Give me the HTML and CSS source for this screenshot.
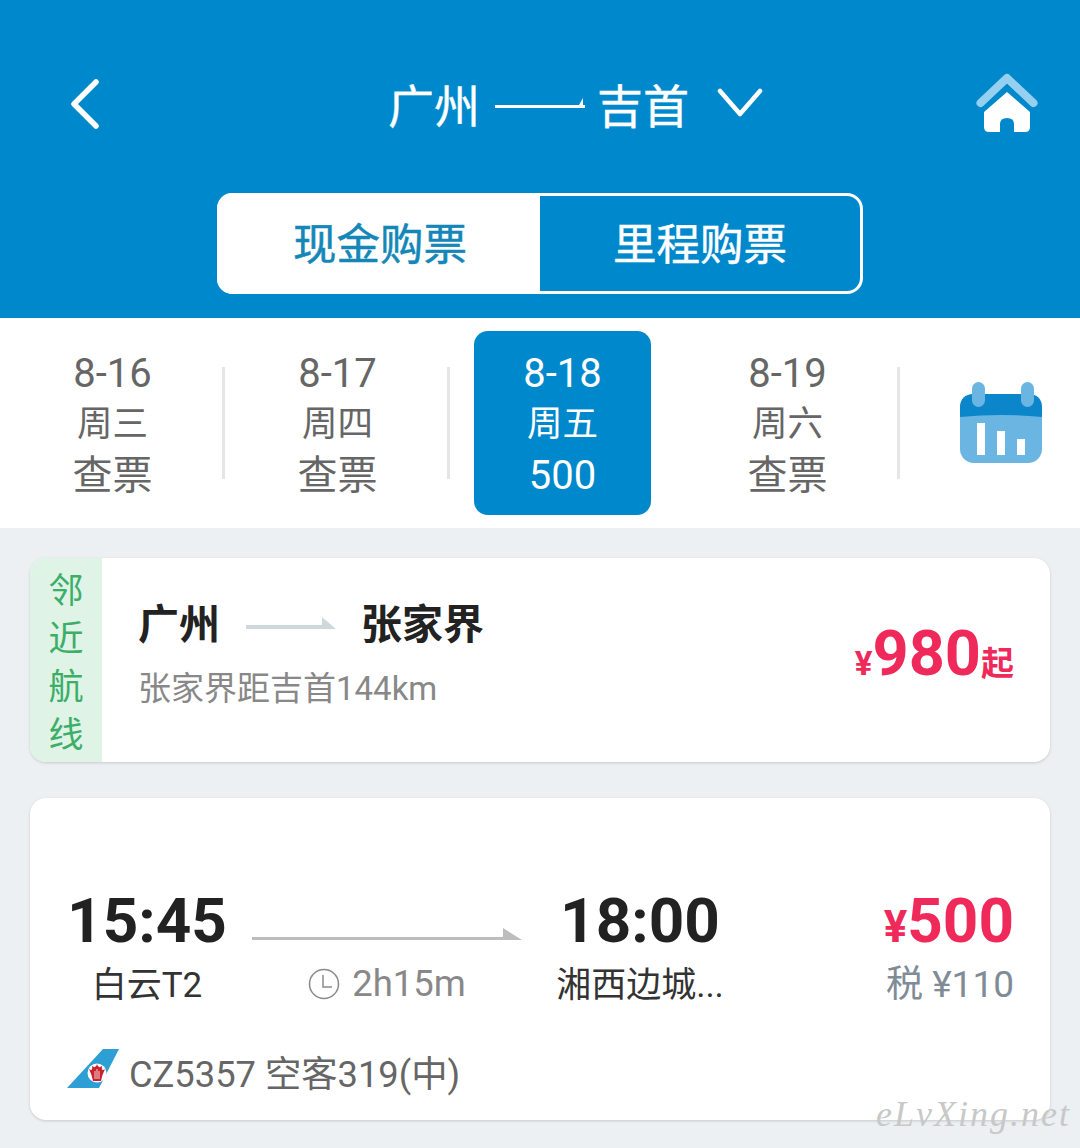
FILE: index.html
```html
<!DOCTYPE html>
<html lang="zh">
<head>
  <meta charset="UTF-8">
  <title>广州 - 吉首</title>
  <link rel="stylesheet" href="styles.css">
</head>
<body>

  <header class="top">
    <div class="nav">
      <svg class="back" width="32" height="50" viewBox="0 0 32 50"><path d="M27 3 L5 25 L27 47" fill="none" stroke="#fff" stroke-width="5.5" stroke-linecap="round" stroke-linejoin="round"/></svg>
      <div class="route">
        <span>广州</span>
        <svg class="route-arrow" width="90" height="12" viewBox="0 0 90 12"><path d="M0 8H84L88 1V8H90V11H0Z" fill="#fff"/></svg>
        <span>吉首</span>
        <svg class="down" width="46" height="30" viewBox="0 0 46 30"><path d="M3 3 L23 26 L43 3" fill="none" stroke="#fff" stroke-width="4.5" stroke-linecap="round" stroke-linejoin="round"/></svg>
      </div>
      <svg class="home" width="62" height="60" viewBox="0 0 62 60">
        <path d="M4.5 30 L31 5 L57.500 30" fill="none" stroke="#96d0f0" stroke-width="8" stroke-linecap="round" stroke-linejoin="round"/>
        <path d="M31 19 L54 39 V54 Q54 59 49 59 H38 V51 Q38 45 31 45 Q24 45 24 51 V59 H13 Q8 59 8 54 V39 Z" fill="#fff"/>
      </svg>
    </div>
    <div class="tabs">
      <div class="tab tab-on">现金购票</div>
      <div class="tab">里程购票</div>
    </div>
  </header>

  <section class="dates">
    <div class="day"><b>8-16</b><span>周三</span><b>查票</b></div>
    <div class="day"><b>8-17</b><span>周四</span><b>查票</b></div>
    <div class="day day-on"><b>8-18</b><span>周五</span><b>500</b></div>
    <div class="day"><b>8-19</b><span>周六</span><b>查票</b></div>
    <div class="cal">
      <svg width="82" height="82" viewBox="0 0 82 82">
        <rect x="0" y="12" width="82" height="69" rx="14" fill="#6bb5e2"/>
        <path d="M0 35 V26 Q0 12 14 12 H68 Q82 12 82 26 V35 Q41 31 0 35 Z" fill="#0b86cb"/>
        <rect x="12" y="0" width="13" height="25" rx="6.500" fill="#6bb5e2"/>
        <rect x="61" y="0" width="13" height="25" rx="6.500" fill="#6bb5e2"/>
        <rect x="17" y="41" width="8" height="32" fill="#fff"/>
        <rect x="37" y="49" width="8" height="24" fill="#fff"/>
        <rect x="57" y="57" width="8" height="16" fill="#fff"/>
      </svg>
    </div>
  </section>

  <main class="list">
    <article class="card near">
      <div class="near-tag"><span>邻</span><span>近</span><span>航</span><span>线</span></div>
      <div class="near-info">
        <div class="near-route">
          <span>广州</span>
          <svg width="90" height="14" viewBox="0 0 90 14"><path d="M0 8H76V0L90 12H0Z" fill="#cfd8dc"/></svg>
          <span>张家界</span>
        </div>
        <div class="near-note">张家界距吉首144km</div>
      </div>
      <div class="near-price"><small>¥</small>980<small class="from">起</small></div>
    </article>

    <article class="card flight">
      <div class="flight-main">
        <div class="stop stop-dep">
          <div class="time">15:45</div>
          <div class="port">白云T2</div>
        </div>
        <div class="mid">
          <svg width="270" height="14" viewBox="0 0 270 14"><path d="M0 9H251V0L270 12H0Z" fill="#bdbdbd"/></svg>
          <div class="dur">
            <svg width="32" height="32" viewBox="0 0 32 32"><circle cx="16" cy="16" r="14.500" fill="none" stroke="#8a8a8a" stroke-width="1.500"/><path d="M15 7V19H24" fill="none" stroke="#8a8a8a" stroke-width="1.500"/></svg>
            <span>2h15m</span>
          </div>
        </div>
        <div class="stop stop-arr">
          <div class="time">18:00</div>
          <div class="port">湘西边城...</div>
        </div>
        <div class="fare">
          <div class="fare-num"><small>¥</small>500</div>
          <div class="tax">税 ¥110</div>
        </div>
      </div>
      <div class="plane">
        <svg width="52" height="40" viewBox="0 0 52 40">
          <path d="M0 39 L36 0 H52 L32 39 Z" fill="#2e9fd4"/>
          <circle cx="30" cy="24" r="9.500" fill="#fff"/>
          <path d="M22 20Q26 23 25 17Q29 20 30 15Q31 20 35 17Q34 23 38 20Q35 26 34 32H26Q25 26 22 20Z" fill="#c8242f"/>
          <path d="M28 22V30M30 20V30M32 22V30" fill="none" stroke="#fff" stroke-width="0.800"/>
        </svg>
        <span>CZ5357 空客319(中)</span>
      </div>
    </article>
  </main>

  <div class="mark">eLvXing.net</div>

</body>
</html>
```

FILE: styles.css
```css
* {
  box-sizing: border-box;
}

html, body {
  margin: 0;
  padding: 0;
}

body {
  position: relative;
  width: 1080px;
  height: 1148px;
  overflow: hidden;
  background: #ecf0f3;
  font-family: "Roboto", "Noto Sans CJK SC", sans-serif;
}

.top {
  height: 318px;
  padding: 72px 42px 0 69px;
  background: #0088cc;
  color: #fff;
}

.nav {
  display: flex;
  align-items: center;
  justify-content: space-between;
  height: 62px;
}

.back {
  margin-top: 2px;
}

.route {
  display: flex;
  align-items: center;
  gap: 13px;
  margin: 8px 0 0 74px;
  font-size: 46px;
  line-height: 62px;
  -webkit-text-stroke: 0.4px #fff;
}

.route-arrow {
  margin: -8px -1px 0 2px;
}

.down {
  margin-left: 15px;
  margin-top: -8px;
}

.tabs {
  display: flex;
  width: 646px;
  height: 101px;
  margin: 59px 0 0 148px;
  border: 3px solid #fff;
  border-radius: 16px;
}

.tab {
  flex: 1;
  text-align: center;
  font-size: 43.500px;
  line-height: 99px;
  -webkit-text-stroke: 0.5px currentColor;
}

.tab-on {
  flex: none;
  width: 323px;
  height: 101px;
  margin: -3px 0 -3px -3px;
  padding-left: 3px;
  background: #fff;
  border-radius: 15px 0 0 15px;
  color: #1487b8;
  line-height: 105px;
}

.dates {
  display: flex;
  height: 210px;
  background: #fff;
}

.day {
  display: flex;
  flex-direction: column;
  align-items: center;
  width: 225px;
  padding-top: 31px;
  color: #666;
  font-size: 35.500px;
  position: relative;
}

.day b {
  font-size: 40px;
  font-weight: 400;
  line-height: 50px;
}

.day b:last-child {
  margin-top: 2px;
}

.day span {
  line-height: 50px;
}

.day:not(.day-on)::after {
  content: "";
  position: absolute;
  right: 0;
  top: 49px;
  width: 3px;
  height: 112px;
  background: #e6e6e6;
}

.day-on {
  width: 177px;
  height: 184px;
  margin: 13px 24px 0;
  padding-top: 18px;
  background: #0088cc;
  border-radius: 14px;
  color: #fff;
}

.cal {
  padding: 64px 0 0 60px;
}

.cal svg {
  display: block;
}

.list {
  display: flex;
  flex-direction: column;
  gap: 36px;
  padding: 30px 30px 0;
}

.card {
  background: #fff;
  border-radius: 16px;
  box-shadow: 0 1px 3px rgba(0, 0, 0, 0.16);
}

.near {
  display: flex;
  height: 204px;
  overflow: hidden;
}

.near-tag {
  display: flex;
  flex-direction: column;
  align-items: center;
  justify-content: center;
  width: 72px;
  padding-top: 8px;
  background: #dff3e6;
  color: #3cae68;
  font-size: 35px;
  line-height: 48px;
}

.near-info {
  flex: 1;
  padding: 38px 0 0 36px;
}

.near-route {
  display: flex;
  align-items: center;
  color: #222;
  font-size: 41px;
  font-weight: 700;
  line-height: 58px;
}

.near-route svg {
  margin: -2px 25px 0 26px;
}

.near-note {
  margin-top: 12px;
  color: #888;
  font-size: 33px;
  line-height: 46px;
}

.near-price {
  align-self: center;
  margin-right: 36px;
  margin-top: -2px;
  color: #ef2a5b;
  font-size: 63px;
  font-weight: 700;
  line-height: 70px;
}

.near-price small {
  font-size: 33px;
}

.flight {
  height: 322px;
  padding: 89px 36px 0 37px;
}

.flight-main {
  display: flex;
}

.stop {
  text-align: center;
}

.stop-dep {
  width: 160px;
}

.stop-arr {
  width: 168px;
}

.time {
  color: #222;
  font-size: 62px;
  font-weight: 700;
  line-height: 68px;
  white-space: nowrap;
}

.port {
  margin-top: 6px;
  color: #333;
  font-size: 35px;
  line-height: 50px;
  white-space: nowrap;
}

.mid {
  width: 270px;
  margin: 41px 34px 0 25px;
  text-align: center;
}

.mid svg {
  display: block;
}

.dur {
  display: flex;
  align-items: center;
  justify-content: center;
  gap: 12px;
  margin-top: 17px;
  color: #888;
  font-size: 36.500px;
  line-height: 50px;
}

.fare {
  flex: 1;
  text-align: right;
}

.fare-num {
  color: #ef2a5b;
  font-size: 62px;
  font-weight: 700;
  line-height: 68px;
}

.fare-num small {
  font-size: 44px;
}

.tax {
  margin-top: -1px;
  color: #7f8c96;
  font-size: 37px;
  line-height: 50px;
}

.plane {
  display: flex;
  align-items: center;
  gap: 10px;
  margin-top: 39px;
  color: #666;
  font-size: 36.300px;
  line-height: 50px;
}

.plane svg {
  margin-top: -13px;
}

.mark {
  position: absolute;
  left: 876px;
  top: 1092px;
  color: #c8c8c8;
  font-family: "Liberation Serif", serif;
  font-style: italic;
  font-size: 36px;
  letter-spacing: 2px;
  line-height: 44px;
}
```
